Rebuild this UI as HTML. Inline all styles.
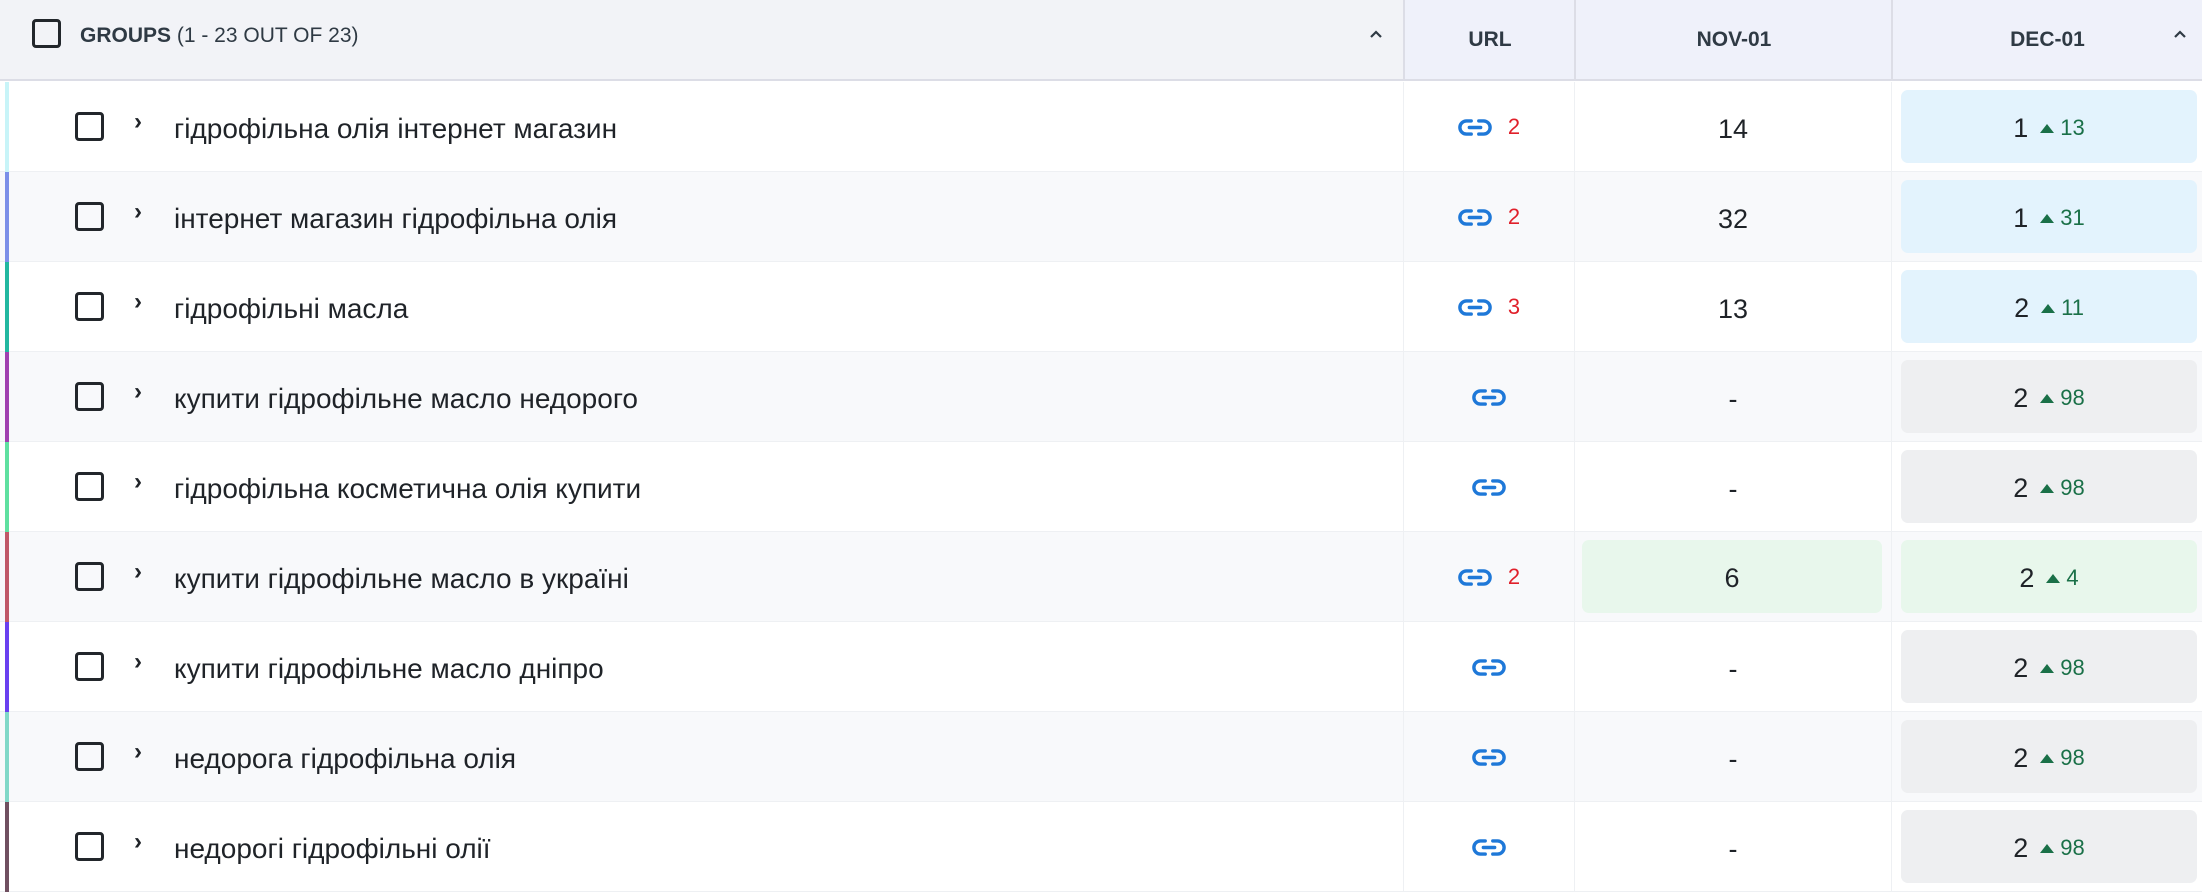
<!DOCTYPE html>
<html><head><meta charset="utf-8"><style>
*{box-sizing:border-box;margin:0;padding:0}
body{width:2202px;height:896px;overflow:hidden;background:#fff;font-family:"Liberation Sans",sans-serif;color:#1f2328;position:relative}
.hdr{position:absolute;left:0;top:0;width:2202px;height:81px;background:#f2f3f7;border-bottom:2px solid #dcdde6}
.hc{position:absolute;top:0;height:79px;background:#eff1fa;border-left:2px solid #dcdde6;display:flex;align-items:center;justify-content:center;font-weight:bold;font-size:21px;color:#2f3a44}
.cb{position:absolute;width:29px;height:29px;border:3px solid #22262b;border-radius:4px;background:transparent}
.row{position:absolute;left:0;width:2202px;height:90px;border-bottom:1px solid #eef0f3}
.bar{position:absolute;left:5px;top:0;width:4px;height:90px}
.sep{position:absolute;top:0;width:1px;height:90px;background:#eef0f3}
.txt{position:absolute;left:174px;top:0;height:90px;line-height:94px;font-size:28px}
.chev{position:absolute;left:134px;top:26px;font-size:24px;font-weight:bold}
.url{position:absolute;left:1404px;width:170px;top:0;height:90px;display:flex;align-items:center;justify-content:center;gap:16px;font-size:22px;color:#e0202a}
.nov{position:absolute;left:1575px;width:316px;top:2px;height:90px;display:flex;align-items:center;justify-content:center;font-size:27px}
.box{position:absolute;top:8px;height:73px;border-radius:7px;display:flex;align-items:center;justify-content:center;font-size:27px;padding-top:3px}
.up{color:#1a7048;font-size:22px;margin-left:12px}
.up:before{content:"";display:inline-block;width:0;height:0;border-left:7px solid transparent;border-right:7px solid transparent;border-bottom:9px solid #1a7048;margin-right:6px;vertical-align:2px}
</style></head><body>
<div class="hdr">
 <div class="cb" style="left:32px;top:19px"></div>
 <div style="position:absolute;left:80px;top:0;line-height:72px;font-size:21px;color:#2f3a44"><b>GROUPS</b> (1 - 23 OUT OF 23)</div>
 <svg style="position:absolute;left:1368px;top:28px" width="16" height="12" viewBox="0 0 16 12"><path d="M3 9 L8 4 L13 9" fill="none" stroke="#2f3a44" stroke-width="2.2"/></svg>
 <div class="hc" style="left:1403px;width:172px">URL</div>
 <div class="hc" style="left:1574px;width:318px">NOV-01</div>
 <div class="hc" style="left:1891px;width:311px">DEC-01</div>
 <svg style="position:absolute;left:2172px;top:28px" width="16" height="12" viewBox="0 0 16 12"><path d="M3 9 L8 4 L13 9" fill="none" stroke="#2f3a44" stroke-width="2.2"/></svg>
</div>
<svg width="0" height="0" style="position:absolute"><defs><symbol id="lk" viewBox="0 0 36 20"><path d="M14 3H9a7 7 0 0 0 0 14h5M22 3h5a7 7 0 0 1 0 14h-5M12 10h12" fill="none" stroke="#1e78d8" stroke-width="3.6" stroke-linecap="round"/></symbol></defs></svg>
<div id="rows"></div>
<script>
var d=[["гідрофільна олія інтернет магазин","#c8f4f8",2,"14","1","13","b"],
["інтернет магазин гідрофільна олія","#7b8fe8",2,"32","1","31","b"],
["гідрофільні масла","#22b8a0",3,"13","2","11","b"],
["купити гідрофільне масло недорого","#a040b0",0,"-","2","98","g"],
["гідрофільна косметична олія купити","#5fe0a0",0,"-","2","98","g"],
["купити гідрофільне масло в україні","#c05868",2,"6","2","4","n"],
["купити гідрофільне масло дніпро","#6a40f0",0,"-","2","98","g"],
["недорога гідрофільна олія","#80d8c8",0,"-","2","98","g"],
["недорогі гідрофільні олії","#705060",0,"-","2","98","g"]];
var h="";
d.forEach(function(r,i){
 var top=82+i*90,bg=i%2?"#f8f9fb":"#fff";
 var bc=r[6]=="b"?"#e3f3fd":r[6]=="g"?"#eeeff1":"#e8f7ec";
 h+='<div class="row" style="top:'+top+'px;background:'+bg+'"><div class="bar" style="background:'+r[1]+'"></div>'+
 '<div class="cb" style="left:75px;top:30px"></div><div class="chev">&#8250;</div><div class="txt">'+r[0]+'</div>'+
 '<div class="sep" style="left:1403px"></div><div class="sep" style="left:1574px"></div><div class="sep" style="left:1891px"></div>'+
 '<div class="url"><svg width="34" height="19"><use href="#lk"/></svg>'+(r[2]?'<span>'+r[2]+'</span>':'')+'</div>'+
 (r[6]=="n"?'<div class="box" style="left:1582px;width:300px;background:#e8f7ec">'+r[3]+'</div>':'<div class="nov">'+r[3]+'</div>')+
 '<div class="box" style="left:1901px;width:296px;background:'+bc+'">'+r[4]+'<span class="up">'+r[5]+'</span></div></div>';
});
document.getElementById("rows").innerHTML=h;
</script>
</body></html>
